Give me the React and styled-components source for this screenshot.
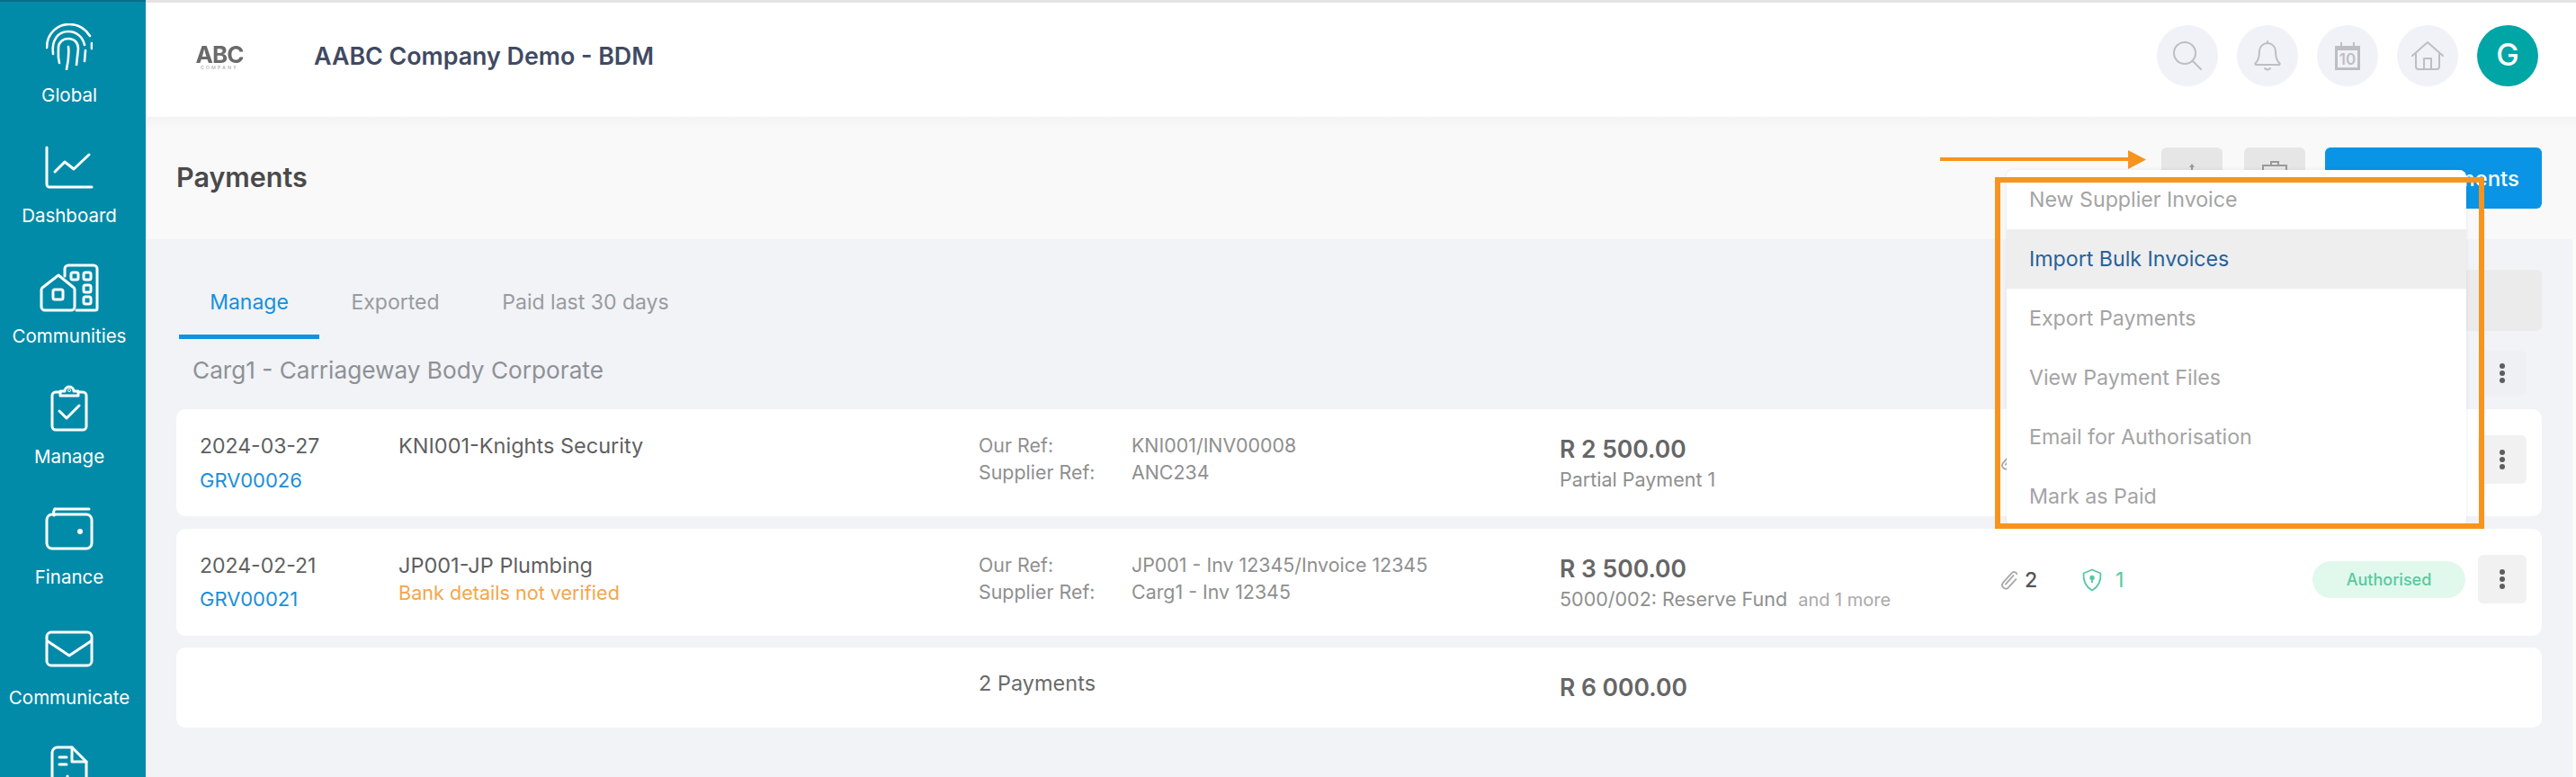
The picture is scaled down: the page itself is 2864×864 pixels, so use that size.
import React from "react";
import styled, { createGlobalStyle } from "styled-components";

const Global = createGlobalStyle`
  html, body { margin: 0; padding: 0; height: 864px; overflow: hidden; background: #f1f3f6; }
  * { box-sizing: border-box; }
  body { font-family: Inter, "Noto Sans", "Liberation Sans", sans-serif; }
`;

const Page = styled.div`
  position: relative;
  display: flex;
  width: 2864px;
  height: 864px;
  overflow: hidden;
`;
const Sidebar = styled.nav`
  width: 162px;
  flex: none;
  height: 864px;
  overflow: hidden;
  background: #028ba8;
  border-top: 2px solid #0b6f88;
  padding-right: 8px;
  display: flex;
  flex-direction: column;
`;
const NavItem = styled.div`
  height: 134px;
  flex: none;
  padding-top: 20px;
  display: flex;
  flex-direction: column;
  align-items: center;
  color: #fff;
  font-size: 20.5px;
  font-weight: 400;
  white-space: nowrap;
`;
const NavIcon = styled.div`
  height: 60px;
  display: flex;
  align-items: center;
  justify-content: center;
  margin-bottom: 11px;
`;
const Main = styled.div`
  flex: 1;
  display: flex;
  flex-direction: column;
  min-width: 0;
`;
const Header = styled.header`
  height: 130px;
  flex: none;
  background: #fff;
  border-top: 3px solid #e4e4e4;
  display: flex;
  align-items: center;
  padding: 0 42px 10px 57px;
`;
const LogoBox = styled.div`
  width: 50px;
  display: flex;
  flex-direction: column;
  align-items: center;
  color: #6a6a6a;
  filter: blur(0.4px);
  margin-right: 80px;
  margin-top: 6px;
`;
const LogoMain = styled.div`
  font-size: 26px;
  font-weight: 700;
  line-height: 22px;
  letter-spacing: -1px;
`;
const LogoSub = styled.div`
  font-size: 5px;
  line-height: 7px;
  letter-spacing: 2.4px;
  color: #999;
`;
const CompanyTitle = styled.h1`
  margin: 0;
  font-size: 26.8px;
  font-weight: 600;
  color: #3f4a63;
  flex: 1;
  white-space: nowrap;
`;
const CircleGroup = styled.div`
  display: flex;
  gap: 21px;
`;
const Circle = styled.div`
  width: 68px;
  height: 68px;
  border-radius: 50%;
  background: ${p => (p.$active ? "#00a6a6" : "#f1f2f8")};
  color: #fff;
  font-size: 34px;
  font-weight: 500;
  padding-bottom: ${p => (p.$active ? "3px" : "0")};
  display: flex;
  align-items: center;
  justify-content: center;
`;
const PageHead = styled.div`
  height: 136px;
  flex: none;
  background: linear-gradient(#f3f3f4 0, #f9f9fa 14px);
  display: flex;
  align-items: flex-start;
  padding: 34px 38px 0 34px;
`;
const PageTitle = styled.h2`
  margin: 0;
  flex: 1;
  font-size: 30.5px;
  line-height: 66px;
  font-weight: 600;
  color: #4a4a4a;
`;
const SquareButton = styled.div`
  width: 68px;
  height: 68px;
  background: #e6e6e6;
  border-radius: 6px;
  margin-right: ${p => p.$mr}px;
  color: #999;
  display: flex;
  justify-content: center;
  padding-top: 14px;
`;
const PrimaryButton = styled.div`
  width: 241px;
  height: 68px;
  background: #0a94e6;
  border-radius: 6px;
  color: #fff;
  font-size: 24px;
  font-weight: 500;
  display: flex;
  align-items: center;
  justify-content: flex-end;
  padding: 0 25px 0 0;
  white-space: nowrap;
`;
const Content = styled.main`
  flex: 1;
  background: #f1f3f6;
  padding: 34px 38px 0 34px;
  border-right: 4px solid #fbfbfc;
`;
const TabBar = styled.div`
  display: flex;
  align-items: flex-start;
  height: 77px;
  padding-left: 3px;
`;
const Tab = styled.div`
  width: ${p => p.$w}px;
  flex: none;
  height: 77px;
  text-align: center;
  line-height: 72px;
  font-size: 23px;
  color: ${p => (p.$active ? "#1391e0" : "#989ba0")};
  border-bottom: 5px solid ${p => (p.$active ? "#0f94e4" : "transparent")};
  white-space: nowrap;
`;
const FilterBar = styled.div`
  margin-left: auto;
  margin-right: -4px;
  width: 500px;
  height: 68px;
  background: #ebebeb;
  border-radius: 6px;
`;
const GroupHead = styled.div`
  height: 78px;
  display: flex;
  align-items: flex-start;
  justify-content: space-between;
  padding: 13px 13px 0 18px;
`;
const GroupTitle = styled.div`
  font-size: 26.2px;
  line-height: 44px;
  color: #8e9196;
`;
const RowList = styled.div`
  display: flex;
  flex-direction: column;
  gap: 13.5px;
  margin-right: -4px;
`;
const Row = styled.div`
  height: ${p => p.$h}px;
  background: #fff;
  border-radius: 10px;
  padding: 25px 17px 0 26px;
  display: flex;
  align-items: flex-start;
`;
const Cell = styled.div`
  width: ${p => p.$w}px;
  flex: none;
`;
const Line = styled.div`
  font-size: ${p => p.$size || 23}px;
  line-height: 30px;
  color: ${p => p.$color || "#5f5f5f"};
  font-weight: ${p => p.$weight || 400};
  margin-top: ${p => p.$mt || 0}px;
  white-space: nowrap;
`;
const RefGrid = styled.div`
  display: grid;
  grid-template-columns: 170px 1fr;
  font-size: 21.4px;
  line-height: 30px;
  color: #8f8f8f;
  white-space: nowrap;
`;
const More = styled.span`
  color: #aaaaaa;
  font-size: 20px;
  margin-left: 12px;
`;
const Count = styled.div`
  width: ${p => p.$w}px;
  flex: none;
  margin-top: 12px;
  height: 40px;
  display: flex;
  align-items: center;
  gap: ${p => p.$gap}px;
  font-size: 23px;
  font-weight: ${p => (p.$green ? 400 : 500)};
  color: ${p => (p.$green ? "#55c9a2" : "#555")};
`;
const Pill = styled.div`
  width: 170px;
  height: 41px;
  flex: none;
  margin-top: 11px;
  border-radius: 21px;
  background: #e0f9ec;
  color: #57c9a0;
  font-size: 18px;
  font-weight: 500;
  display: flex;
  align-items: center;
  justify-content: center;
`;
const Kebab = styled.div`
  width: 54px;
  height: ${p => p.$h || 54}px;
  flex: none;
  margin-left: ${p => p.$ml || 0}px;
  margin-top: ${p => p.$mt || 0}px;
  background: ${p => p.$bg || "#f1f1f1"};
  border-radius: 6px;
  display: flex;
  flex-direction: column;
  gap: 2px;
  align-items: center;
  justify-content: center;
`;
const Dot = styled.i`
  width: 6px;
  height: 6px;
  border-radius: 50%;
  background: #5e5e5e;
`;
const Menu = styled.div`
  position: absolute;
  left: 2231px;
  top: 189px;
  width: 511px;
  height: 396px;
  background: #fff;
  border-radius: 8px;
  overflow: hidden;
  box-shadow: 0 0 4px rgba(0, 0, 0, 0.08);
`;
const MenuItem = styled.div`
  height: 66px;
  padding: 0 26px 0 25px;
  display: flex;
  align-items: center;
  font-size: 23.2px;
  color: ${p => (p.$active ? "#27619a" : "#a4a4a4")};
  background: ${p => (p.$active ? "#eeeeee" : "#fff")};
`;
const Highlight = styled.div`
  position: absolute;
  left: 2218px;
  top: 197px;
  width: 544px;
  height: 391px;
  border: 6px solid #f7941d;
  pointer-events: none;
`;
const ArrowMark = styled.svg`
  position: absolute;
  left: 2157px;
  top: 167px;
`;

const S = { fill: "none", stroke: "#fff", strokeLinecap: "round", strokeLinejoin: "round" };
const G = { fill: "none", stroke: "#bdbec3", strokeWidth: 2, strokeLinecap: "round", strokeLinejoin: "round" };

const nav = [
  ["Global", <svg width="52" height="52" viewBox="0 0 52 52" {...S} strokeWidth="2.6"><path d="M1 27C1 10 14 1 26 1c10 0 18 5 23 13" /><path d="M51 22v6" /><path d="M8 34C6 18 14 9 25 9c9 0 16 6 18 15" /><path d="M44 30l-1 12" /><path d="M15 44c-2-8-1-12-1-17 0-6 5-10 11-10 7 0 11 5 11 11l-2 18" /><path d="M25 26c1 9 0 16-2 25" /></svg>],
  ["Dashboard", <svg width="54" height="48" viewBox="0 0 54 48" {...S} strokeWidth="3"><path d="M2 2v41a3 3 0 0 0 3 3h47" /><path d="M11 29l11-11 10 8 17-16" /></svg>],
  ["Communities", <svg width="66" height="54" viewBox="0 0 66 54" {...S} strokeWidth="3"><path d="M28 14V6a4 4 0 0 1 4-4h28a4 4 0 0 1 4 4v44a2 2 0 0 1-2 2H41" /><path d="M3 27L21 13l16 13a4 4 0 0 1 2 4v18a4 4 0 0 1-4 4H6a4 4 0 0 1-4-4V30a4 4 0 0 1 1-3z" /><rect x="15" y="29" width="11" height="11" rx="2" /><rect x="35" y="10" width="8" height="8" rx="2" /><rect x="49" y="10" width="8" height="8" rx="2" /><rect x="49" y="24" width="8" height="8" rx="2" /><rect x="49" y="37" width="8" height="8" rx="2" /></svg>],
  ["Manage", <svg width="42" height="54" viewBox="0 0 42 54" {...S} strokeWidth="3"><path d="M11 9H6a4 4 0 0 0-4 4v34a4 4 0 0 0 4 4h30a4 4 0 0 0 4-4V13a4 4 0 0 0-4-4h-5" /><path d="M11 13h20V8h-5a5 5 0 0 0-10 0h-5z" /><path d="M10 30l8 8 14-14" /><circle cx="21" cy="7" r="0.5" /></svg>],
  ["Finance", <svg width="54" height="48" viewBox="0 0 54 48" {...S} strokeWidth="3"><path d="M11 2h38" /><rect x="2" y="8" width="50" height="38" rx="6" /><path d="M10 9a8 8 0 0 1 1-7" /><circle cx="39" cy="27" r="1.5" fill="#fff" /></svg>],
  ["Communicate", <svg width="54" height="42" viewBox="0 0 54 42" {...S} strokeWidth="3"><rect x="2" y="2" width="50" height="37" rx="5" /><path d="M3 12l24 16 24-16" /></svg>],
  ["", <svg width="42" height="54" viewBox="0 0 42 54" {...S} strokeWidth="3"><path d="M24 2H8a6 6 0 0 0-6 6v38a6 6 0 0 0 6 6h26a6 6 0 0 0 6-6V18z" /><path d="M24 2v16h16" /><path d="M10 13h8M10 21h8M19 34v8" /></svg>],
];

const Clip = ({ c = "#a9a9a9" }) => (
  <svg width="22" height="26" viewBox="0 0 24 24" fill="none" stroke={c} strokeWidth="2" strokeLinecap="round" strokeLinejoin="round"><path d="M21 4.5a3.5 3.5 0 0 0-6-1L4 15.5a4.5 4.5 0 0 0 6.500 6L20 11" /><path d="M17 6.500L7.500 17" /></svg>
);
const Shield = () => (
  <svg width="24" height="26" viewBox="0 0 24 26" fill="none" stroke="#55c9a2" strokeWidth="1.8" strokeLinejoin="round"><path d="M12 1.500l9.500 4c.5 8-1.500 14.500-9.500 19-8-4.500-10-11-9.500-19z" /><circle cx="12" cy="10.500" r="1.800" fill="#55c9a2" /><path d="M12 11v5" /></svg>
);
const Dots = () => (<><Dot /><Dot /><Dot /></>);

export default function App() {
  return (
    <Page>
      <Global />
      <Sidebar>
        {nav.map(([label, icon], i) => (
          <NavItem key={i}>
            <NavIcon>{icon}</NavIcon>
            {label}
          </NavItem>
        ))}
      </Sidebar>
      <Main>
        <Header>
          <LogoBox>
            <LogoMain>ABC</LogoMain>
            <LogoSub>COMPANY</LogoSub>
          </LogoBox>
          <CompanyTitle>AABC Company Demo - BDM</CompanyTitle>
          <CircleGroup>
            <Circle>
              <svg width="34" height="34" viewBox="0 0 34 34" {...G}><circle cx="14" cy="14" r="12" /><path d="M23 23l9 9" /></svg>
            </Circle>
            <Circle>
              <svg width="30" height="36" viewBox="0 0 30 36" {...G}><path d="M15 2v2M15 4a9 9 0 0 0-9 9c0 7-1 10-4 13a1 1 0 0 0 1 2h24a1 1 0 0 0 1-2c-3-3-4-6-4-13a9 9 0 0 0-9-9z" /><path d="M12 32c2 2 4 2 6 0" /></svg>
            </Circle>
            <Circle>
              <svg width="28" height="32" viewBox="0 0 28 32"><path d="M0 5h6V1h2v4h12V1h2v4h6v27H0z" fill="#bdbec3" /><rect x="3" y="10" width="22" height="19" fill="#f1f2f8" /><text x="14" y="26" fontSize="17" fontWeight="600" fontFamily="Inter, sans-serif" textAnchor="middle" fill="#bdbec3">10</text></svg>
            </Circle>
            <Circle>
              <svg width="36" height="32" viewBox="0 0 36 32" {...G}><path d="M1 16L18 1l17 15" /><path d="M5 14v14a3 3 0 0 0 3 3h20a3 3 0 0 0 3-3V14" /><path d="M14 31V19h8v12" /></svg>
            </Circle>
            <Circle $active>G</Circle>
          </CircleGroup>
        </Header>
        <PageHead>
          <PageTitle>Payments</PageTitle>
          <SquareButton $mr={24}>
            <svg width="12" height="12" viewBox="0 0 12 12" fill="#999"><path d="M6 4l3 4H3z" /><rect x="5" y="7" width="2" height="5" /></svg>
          </SquareButton>
          <SquareButton $mr={22}>
            <svg width="28" height="12" viewBox="0 0 28 12" fill="none" stroke="#999" strokeWidth="2"><path d="M1 12V6h26v6M10 6V2h8v4" /></svg>
          </SquareButton>
          <PrimaryButton>New Payments</PrimaryButton>
        </PageHead>
        <Content>
          <TabBar>
            <Tab $w={156} $active>Manage</Tab>
            <Tab $w={169}>Exported</Tab>
            <Tab $w={254}>Paid last 30 days</Tab>
            <FilterBar />
          </TabBar>
          <GroupHead>
            <GroupTitle>Carg1 - Carriageway Body Corporate</GroupTitle>
            <Kebab $h={50} $bg="#eff0f3"><Dots /></Kebab>
          </GroupHead>
          <RowList>
            <Row $h={119}>
              <Cell $w={221}>
                <Line $mt={1}>2024-03-27</Line>
                <Line $color="#1b8fd8" $size={22} $mt={8}>GRV00026</Line>
              </Cell>
              <Cell $w={645}><Line $mt={1} $size={23.5}>KNI001-Knights Security</Line></Cell>
              <Cell $w={646}>
                <RefGrid>
                  <span>Our Ref:</span><span>KNI001/INV00008</span>
                  <span>Supplier Ref:</span><span>ANC234</span>
                </RefGrid>
              </Cell>
              <Cell $w={489}>
                <Line $mt={4} $size={26.5} $weight={600} $color="#666">R 2 500.00</Line>
                <Line $mt={4} $size={21.5} $color="#8f8f8f">Partial Payment 1</Line>
              </Cell>
              <Count $w={91} $gap={6}><Clip /><span>1</span></Count>
              <Count $w={257} $gap={14} $green><Shield /><span>1</span></Count>
              <Pill>Authorised</Pill>
              <Kebab $ml={14} $mt={4}><Dots /></Kebab>
            </Row>
            <Row $h={119}>
              <Cell $w={221}>
                <Line $mt={1}>2024-02-21</Line>
                <Line $color="#1b8fd8" $size={22} $mt={7}>GRV00021</Line>
              </Cell>
              <Cell $w={645}>
                <Line $mt={1} $size={23.5}>JP001-JP Plumbing</Line>
                <Line $color="#f5a64a" $size={21.6}>Bank details not verified</Line>
              </Cell>
              <Cell $w={646}>
                <RefGrid>
                  <span>Our Ref:</span><span>JP001 - Inv 12345/Invoice 12345</span>
                  <span>Supplier Ref:</span><span>Carg1 - Inv 12345</span>
                </RefGrid>
              </Cell>
              <Cell $w={489}>
                <Line $mt={4} $size={26.5} $weight={600} $color="#666">R 3 500.00</Line>
                <Line $mt={4} $size={21.5} $color="#8f8f8f">5000/002: Reserve Fund<More>and 1 more</More></Line>
              </Cell>
              <Count $w={91} $gap={6}><Clip /><span>2</span></Count>
              <Count $w={257} $gap={14} $green><Shield /><span>1</span></Count>
              <Pill>Authorised</Pill>
              <Kebab $ml={14} $mt={4}><Dots /></Kebab>
            </Row>
            <Row $h={89}>
              <Cell $w={221} />
              <Cell $w={645} />
              <Cell $w={646}><Line $size={23.5} $color="#6a6a6a">2 Payments</Line></Cell>
              <Cell $w={489}><Line $mt={4} $size={26.5} $weight={600} $color="#666">R 6 000.00</Line></Cell>
            </Row>
          </RowList>
        </Content>
      </Main>
      <ArrowMark width="230" height="21" viewBox="0 0 230 21">
        <rect x="0" y="8" width="212" height="4" fill="#f7941d" />
        <path d="M209 0l20 10.500L209 21z" fill="#f7941d" />
      </ArrowMark>
      <Menu>
        <MenuItem>New Supplier Invoice</MenuItem>
        <MenuItem $active>Import Bulk Invoices</MenuItem>
        <MenuItem>Export Payments</MenuItem>
        <MenuItem>View Payment Files</MenuItem>
        <MenuItem>Email for Authorisation</MenuItem>
        <MenuItem>Mark as Paid</MenuItem>
      </Menu>
      <Highlight />
    </Page>
  );
}
